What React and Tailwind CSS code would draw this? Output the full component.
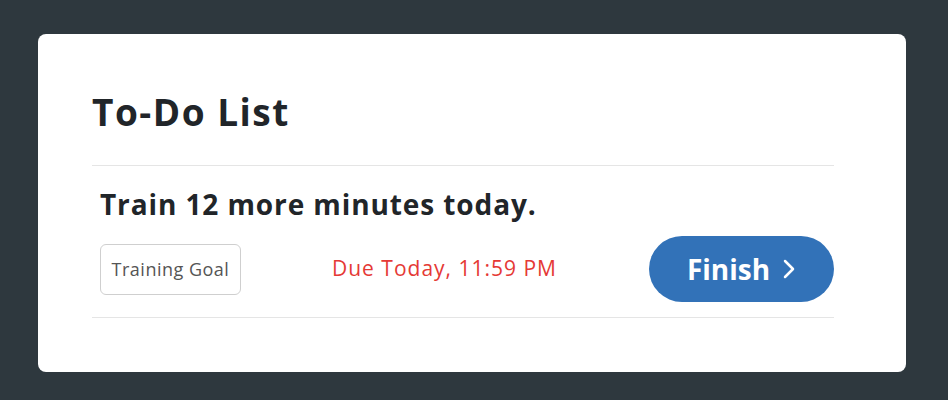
import React from "react";

export default function App() {
  return (
    <div className="w-[948px] h-[400px] bg-[#2e383e] pt-[34px] pl-[38px]" style={{ fontFamily: "'Open Sans', 'Noto Sans', sans-serif" }}>
      <div className="w-[868px] h-[338px] bg-white rounded-[8px] pl-[54px] pr-[72px] pt-[54px]">
        <h1 className="text-[37px] font-bold text-[#212529] leading-[48px] h-[77px] tracking-[1.5px]">To-Do List</h1>
        <div className="border-t border-[#e5e5e5]"></div>
        <div className="px-[8px] pt-[20px] pb-[15px]">
          <div className="text-[28px] font-bold text-[#212529] leading-[36px] tracking-[0.9px]">Train 12 more minutes today.</div>
          <div className="flex items-center mt-[14px]">
            <div className="h-[51px] w-[141px] border border-[#cfcfcf] rounded-[6px] flex items-center justify-center text-[18px] text-[#555] tracking-[0.5px]">Training Goal</div>
            <div className="ml-[91px] text-[21px] text-[#e53935] tracking-[1px]">Due Today, 11:59 PM</div>
            <button className="ml-auto mr-[-8px] h-[66px] w-[185px] rounded-full bg-[#3272b8] text-white text-[28px] font-bold flex items-center justify-center gap-[12px]">
              Finish
              <svg width="14" height="22" viewBox="0 0 14 22" fill="none" stroke="white" strokeWidth="2.5" strokeLinecap="round" strokeLinejoin="round"><path d="M3 3l8 8-8 8" /></svg>
            </button>
          </div>
        </div>
        <div className="border-t border-[#e5e5e5]"></div>
      </div>
    </div>
  );
}
